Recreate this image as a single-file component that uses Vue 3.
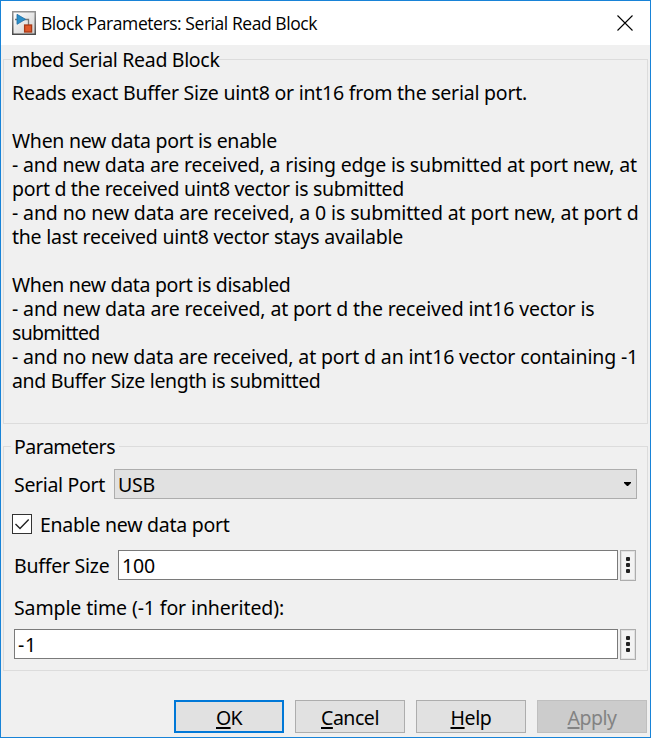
<script setup>
import { ref } from 'vue'

const description = [
  ['Reads exact Buffer Size uint8 or int16 from the serial port.', 515],
  ['', 0],
  ['When new data port is enable', 265],
  ['- and new data are received, a rising edge is submitted at port new, at', 625],
  ['port d the received uint8 vector is submitted', 392],
  ['- and no new data are received, a 0 is submitted at port new, at port d', 626.5],
  ['the last received uint8 vector stays available', 391],
  ['', 0],
  ['When new data port is disabled', 278.5],
  ['- and new data are received, at port d the received int16 vector is', 582.5],
  ['submitted', 87.5],
  ['- and no new data are received, at port d an int16 vector containing -1', 626],
  ['and Buffer Size length is submitted', 308.5]
]

const buttons = [
  { key: 'O', rest: 'K', width: 26, kind: 'primary' },
  { key: 'C', rest: 'ancel', width: 58, kind: '' },
  { key: 'H', rest: 'elp', width: 41, kind: '' },
  { key: 'A', rest: 'pply', width: 49, kind: 'disabled' }
]

const enabled = ref(true)

// Spaces the letters of a line so that the line takes the given width.
const vFit = {
  mounted(el, { value }) {
    const count = el.textContent.length
    if (!count || !value) return
    const natural = el.getBoundingClientRect().width
    const spacing = (value - natural) / count
    el.style.letterSpacing = spacing.toFixed(3) + 'px'
  }
}
</script>

<template>
  <div class="window">
    <header class="titlebar">
      <svg class="app-icon" width="24" height="24" viewBox="0 0 24 24">
        <defs>
          <linearGradient id="face" x1="0" y1="0" x2="1" y2="1">
            <stop offset="0" stop-color="#ffffff" />
            <stop offset="1" stop-color="#cfcfcf" />
          </linearGradient>
          <linearGradient id="edge" x1="0" y1="0" x2="0" y2="1">
            <stop offset="0" stop-color="#929292" />
            <stop offset="1" stop-color="#4c4c4c" />
          </linearGradient>
        </defs>
        <rect x="0.75" y="0.75" width="22.5" height="22.5" fill="url(#face)" stroke="url(#edge)" stroke-width="1.5" />
        <path d="M3 8.5H16.5V14" fill="none" stroke="#777" stroke-width="1.3" />
        <path d="M5 3.3L13.5 8.3L5 13.3Z" fill="#2b8fc9" stroke="#1f6da3" stroke-width="0.8" />
        <rect x="12.6" y="14" width="7" height="7" fill="#e0582a" stroke="#a93a16" stroke-width="1.3" />
      </svg>
      <h1 class="title"><span v-fit="276" class="fit">Block Parameters: Serial Read Block</span></h1>
      <svg class="close" width="16" height="16" viewBox="0 0 16 16">
        <path d="M0.5 0.5L15.5 15.5M15.5 0.5L0.5 15.5" fill="none" stroke="#000" stroke-width="1.1" />
      </svg>
    </header>

    <fieldset class="group about">
      <legend><span v-fit="207.5" class="fit">mbed Serial Read Block</span></legend>
      <p v-for="([text, width], i) in description" :key="i" class="line">
        <span v-fit="width" class="fit">{{ text }}</span>
      </p>
    </fieldset>

    <fieldset class="group params">
      <legend><span v-fit="101" class="fit">Parameters</span></legend>
      <div class="row port">
        <label><span v-fit="91" class="fit">Serial Port</span></label>
        <div class="select">
          <span v-fit="37" class="fit">USB</span>
          <svg width="7" height="4" viewBox="0 0 7 4"><path d="M0 0H7V1L4 4H3L0 1Z" /></svg>
        </div>
      </div>
      <div class="row check" @click="enabled = !enabled">
        <span class="box">
          <svg v-if="enabled" width="18" height="18" viewBox="0 0 18 18">
            <path d="M2.5 9L7 13.5L15.7 4.5" fill="none" stroke="#222" stroke-width="1.4" />
          </svg>
        </span>
        <span v-fit="189.5" class="fit">Enable new data port</span>
      </div>
      <div class="row buffer">
        <label><span v-fit="95.5" class="fit">Buffer Size</span></label>
        <div class="field"><span v-fit="33" class="fit">100</span></div>
        <div class="more"><i></i><i></i><i></i></div>
      </div>
      <div class="caption"><span v-fit="270" class="fit">Sample time (-1 for inherited):</span></div>
      <div class="row sample">
        <div class="field"><span v-fit="19" class="fit">-1</span></div>
        <div class="more"><i></i><i></i><i></i></div>
      </div>
    </fieldset>

    <footer class="actions">
      <button v-for="b in buttons" :key="b.key" :class="['btn', b.kind]">
        <span v-fit="b.width" class="fit"><span class="mnemonic">{{ b.key }}</span>{{ b.rest }}</span>
      </button>
    </footer>
  </div>
</template>

<style>
body {
  margin: 0;
  background: #f0f0f0;
}
</style>

<style scoped>
* {
  box-sizing: border-box;
}
.window {
  width: 651px;
  height: 738px;
  border: 1px solid #1883d7;
  background: #f0f0f0;
  font-family: "Noto Sans", "Open Sans", sans-serif;
  font-size: 19.5px;
  line-height: 24px;
  color: #000;
  overflow: hidden;
}
.fit {
  display: inline-block;
  white-space: pre;
}
.titlebar {
  height: 44px;
  padding: 0 17px 0 11px;
  display: flex;
  align-items: center;
  background: #fff;
}
.title {
  margin: 0 auto 0 5px;
  font: 400 17.5px/24px "Open Sans", "Noto Sans", sans-serif;
}
.close {
  margin-top: -1px;
}
.group {
  margin: 0 2px;
  min-width: 0;
  border: 1px solid #dcdcdc;
}
.group legend {
  height: 24px;
  padding: 1px 0 0 1px;
  margin: 0;
}
.about {
  margin-top: 2px;
  height: 377px;
  padding: 10px 0 0 8px;
}
.about legend {
  padding-left: 0;
}
.line {
  margin: 0;
  height: 24px;
}
.params {
  margin-top: 10px;
  height: 237px;
  padding: 11px 10px 0 10px;
}
.params legend {
  margin-left: -3px;
  padding: 1px 4px 0 3px;
}
.row {
  display: flex;
  align-items: center;
}
.port {
  height: 30px;
}
.port label {
  width: 100px;
  padding-top: 1px;
}
.select {
  flex: 1;
  height: 30px;
  padding: 0 5px 0 3px;
  display: flex;
  align-items: center;
  justify-content: space-between;
  border: 1px solid #adadad;
  background: #e1e1e1;
}
.select .fit {
  padding-top: 2px;
}
.check {
  height: 20px;
  margin: 15px 0 0 -2px;
}
.check .fit {
  padding-top: 2px;
}
.box {
  width: 20px;
  height: 20px;
  margin-right: 8px;
  border: 1px solid #333;
  background: #fff;
}
.box svg {
  display: block;
}
.buffer {
  height: 31px;
  margin-top: 16px;
  padding-right: 1px;
  align-items: flex-start;
}
.buffer label {
  width: 104px;
  padding-top: 4px;
}
.field {
  flex: 1;
  height: 30px;
  padding: 3px 0 0 3px;
  border: 1px solid #7a7a7a;
  background: #fff;
}
.more {
  width: 16px;
  height: 31px;
  margin-left: 2px;
  display: flex;
  flex-direction: column;
  align-items: center;
  gap: 2px;
  padding-top: 6px;
  border: 1px solid #adadad;
  background: #f3f3f3;
  box-shadow: inset 0 0 0 1px #e1e1e1;
}
.more i {
  width: 4px;
  height: 4px;
  border-radius: 1px;
  background: #222;
}
.caption {
  height: 24px;
  margin-top: 15px;
}
.sample {
  height: 31px;
  margin-top: 9px;
  padding-right: 1px;
  align-items: flex-start;
}
.actions {
  display: flex;
  justify-content: flex-end;
  gap: 11px;
  margin: 29px 3px 0 0;
}
.btn {
  width: 110px;
  height: 33px;
  padding: 2px 0 0;
  border: 1px solid #adadad;
  background: #e1e1e1;
  font: inherit;
  line-height: 24px;
  color: #000;
}
.primary {
  border: 2px solid #0078d7;
}
.disabled {
  border-color: #bfbfbf;
  background: #ccc;
  color: #838383;
}
.mnemonic {
  text-decoration: underline;
  text-decoration-thickness: 2px;
  text-underline-offset: 2px;
  text-decoration-skip-ink: none;
}
</style>
